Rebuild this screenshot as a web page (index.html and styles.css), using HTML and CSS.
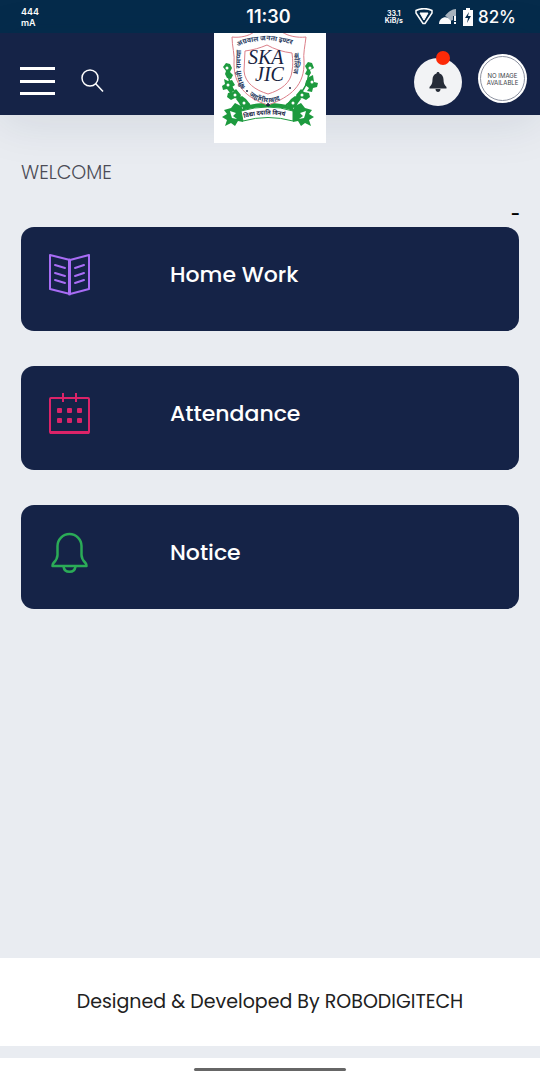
FILE: index.html
```html
<!DOCTYPE html>
<html lang="en">
<head>
    <meta charset="UTF-8">
    <meta name="viewport" content="width=device-width, initial-scale=1.0">
    <title>SKA JIC</title>
    <link rel="stylesheet" href="styles.css">
</head>
<body>
    <div class="status-bar">
        <div class="status-current">444<br>mA</div>
        <div class="status-time">11:30</div>
        <div class="status-right">
            <div class="status-speed">33.1<br>KiB/s</div>
            <svg class="wifi-icon" width="18" height="18" viewBox="0 0 18 18" fill="none" stroke="#fff" stroke-linejoin="round">
                <path d="M1 2.500C5 0 13 0 17 2.500V5L10 15.500H8L1 5z" stroke-width="1.500"/>
                <path d="M5 5h8L9 12z" fill="#fff" stroke-width="1"/>
            </svg>
            <svg class="signal-icon" width="18" height="18" viewBox="0 0 18 18">
                <path d="M6 8C9 4 13 1 17 1v7h-3v4l-3 1-3-4z" fill="#a9b5c0"/>
                <path d="M0 16c0-6 6-8 9-6l3 3v3z" fill="#fff"/>
                <path d="M15 8h2v5h-2zM15 14h2v2h-2z" fill="#fff"/>
            </svg>
            <svg class="battery-icon" width="10" height="18" viewBox="0 0 10 18">
                <path d="M3 0h4v2h3v16H0V2h3z" fill="#fff"/>
                <path d="M6 4 2 10h3l-1 5 4-7H5z" fill="#052b4b"/>
            </svg>
            <span class="status-percent">82%</span>
        </div>
    </div>

    <header class="header">
        <div class="header-left">
            <button class="icon-button" type="button" aria-label="Menu">
                <svg width="36" height="30" viewBox="0 0 36 30" stroke="#fff" stroke-width="3">
                    <path d="M0 2.500h35M0 15.500h35M0 27.500h35"/>
                </svg>
            </button>
            <button class="icon-button" type="button" aria-label="Search">
                <svg width="24" height="24" viewBox="0 0 24 24" fill="none" stroke="#fff" stroke-width="1.500">
                    <circle cx="9" cy="9" r="8"/>
                    <path d="M14.500 14.500L22 22.500"/>
                </svg>
            </button>
        </div>

        <a class="logo" href="#" aria-label="Home">
            <svg width="112" height="110" viewBox="0 0 112 110">
                <defs>
                    <path id="arc-left" d="M32 55C25 42 27 30 27 17"/>
                    <path id="arc-top" d="M24 14C32 8 42 9 52 7C66 8 78 11 92 16"/>
                    <path id="arc-right" d="M80 20C81 30 80 42 75 54"/>
                    <path id="arc-bottom" d="M35 62C46 72 62 72 76 61"/>
                    <path id="arc-ribbon" d="M30 85Q54 78 79 85"/>
                </defs>
                <g fill="#1d9a3e">
                    <path d="M9 34l3-4 4 1 2 4-2 4 3 3-2 4-4-1-2-4 1-3zM10 46l4 2 4-1 3 5-3 2 2 4-4 2-3-4-4 1-1-4 3-2zM14 60l5-1 3-3 5 6-2 5-4-2-4 2-4-3zM22 66l6-3 4 3 4 5-3 5-6-2-2-4z"/>
                    <path d="M98 30l-4-1-3 4 2 4-2 4 4 2 2-3-1-3 4-2zM99 42l-4 2-3 4-1 4 4 3-2 3 5 1 1-4 4-1 1-4-4-1zM95 60l-5-1-3-3-5 6 2 5 4-2 4 2 4-3zM87 66l-6-3-4 3-4 5 3 5 6-2 2-4z"/>
                    <path d="M10 77l7-2 4-5 6 3 3 5-1 11-5-1-3 5-4-3-6 3 2-6-5-3 5-3z"/>
                    <path d="M98 77l-7-2-4-5-6 3-3 5 1 11 5-1 3 5 4-3 6 3-2-6 5-3-5-3z"/>
                    <path d="M29 74c8-3 16-4 25-4s18 1 25 4v4c-8-3-16-4-25-4s-17 1-25 4z"/>
                </g>
                <g fill="none" stroke="#1d9a3e" stroke-width="1.500">
                    <path d="M14 36c0 16 6 26 22 36M95 36c0 16-7 26-23 36"/>
                </g>
                <g fill="#fff">
                    <circle cx="13" cy="35" r="1.500"/><circle cx="14" cy="52" r="1.500"/><circle cx="21" cy="62" r="1.500"/><circle cx="30" cy="70" r="1.500"/>
                    <circle cx="96" cy="35" r="1.500"/><circle cx="98" cy="49" r="1.500"/><circle cx="88" cy="62" r="1.500"/><circle cx="79" cy="70" r="1.500"/>
                    <path d="M16 78l6 2-3 3 4 3-5-1-1-3zM92 78l-6 2 3 3-4 3 5-1 1-3z"/>
                </g>
                <path d="M18 4c8 1 17-1 22-5h28c6 4 15 6 24 5-1 9-3 17-2 24 1 24-13 36-36 44C31 65 20 51 20 31c1-9-2-18-2-27z" fill="#fff" stroke="#dc7f89"/>
                <path d="M31 18c8-1 15-3 22-6 7 4 16 7 25 8 1 8 1 12 0 18-1 12-11 19-24 23C41 57 31 50 30 38c0-7 1-13 1-20z" fill="#fff" stroke="#dc7f89"/>
                <g class="logo-initials">
                    <text x="34" y="31">SKA</text>
                    <text x="41" y="48">JIC</text>
                </g>
                <g class="logo-ring">
                    <text><textPath href="#arc-left">श्रीमती रामप्या</textPath></text>
                    <text><textPath href="#arc-top">अग्रवाल जनता इण्टर</textPath></text>
                    <text><textPath href="#arc-right">कॉलिज</textPath></text>
                    <text><textPath href="#arc-bottom">जहाँगीराबाद</textPath></text>
                </g>
                <circle cx="33" cy="58" r="1" fill="#17233f"/>
                <circle cx="76" cy="55" r="1" fill="#17233f"/>
                <path d="M54 70v5M52 72h4" stroke="#17233f" stroke-width="1.500"/>
                <path d="M27 78Q54 70 79 78L79 88Q54 81 29 88z" fill="#fff" stroke="#1d9a3e"/>
                <text class="logo-motto"><textPath href="#arc-ribbon">विद्या ददाति विनयं</textPath></text>
            </svg>
        </a>

        <div class="header-right">
            <button class="bell-button" type="button" aria-label="Notifications">
                <svg width="18" height="20" viewBox="0 0 18 20" fill="#262c38">
                    <path d="M9 0c1 0 1.500.600 1.500 1.500C13 2.200 14.500 4.500 14.500 7.500c0 4 1 5.500 3 7.500v1.500H.500V15c2-2 3-3.500 3-7.500 0-3 1.500-5.300 4-6C7.500.600 8 0 9 0z"/>
                    <path d="M6.500 17h5c0 4-5 4-5 0z"/>
                </svg>
                <span class="bell-dot"></span>
            </button>
            <a class="avatar" href="#"><span class="avatar-ring">NO IMAGE<br>AVAILABLE</span></a>
        </div>
    </header>

    <main class="content">
        <h1 class="welcome">WELCOME</h1>
        <div class="session">-</div>
        <nav class="card-list">
            <a class="card" href="#">
                <svg class="card-icon" width="42" height="42" viewBox="0 0 42 42" fill="none" stroke="#a86cf5" stroke-width="2" stroke-linejoin="round" stroke-linecap="round">
                    <path d="M1 1l20 5 19-5v34l-19 5-20-5z"/>
                    <path d="M20.500 6v34" stroke-width="3"/>
                    <path d="M6 11l10 3M6 19l10 3M6 26l10 3M35 11l-9 3M35 19l-9 3M35 26l-9 3"/>
                </svg>
                <span class="card-title">Home Work</span>
            </a>
            <a class="card" href="#">
                <svg class="card-icon" width="42" height="42" viewBox="0 0 42 42" fill="none" stroke="#db2368" stroke-width="2">
                    <rect x="1" y="5" width="39" height="35" rx="1"/>
                    <path d="M1 39.500h39" stroke-width="3"/>
                    <path d="M14 0v9M27 0v9"/>
                    <g fill="#db2368" stroke="none">
                        <rect x="8" y="15" width="5" height="5" rx="1"/><rect x="18" y="15" width="5" height="5" rx="1"/><rect x="28" y="15" width="5" height="5" rx="1"/>
                        <rect x="8" y="25" width="5" height="5" rx="1"/><rect x="18" y="25" width="5" height="5" rx="1"/><rect x="28" y="25" width="5" height="5" rx="1"/>
                    </g>
                </svg>
                <span class="card-title">Attendance</span>
            </a>
            <a class="card" href="#">
                <svg class="card-icon" width="42" height="42" viewBox="0 0 42 42" fill="none" stroke="#2bab57" stroke-width="2.500" stroke-linejoin="round">
                    <path d="M8.500 14a12 12 0 0 1 24 0v9c0 4 2 6 4 8 1 1 1 2 1 3h-34c0-1 0-2 1-3 2-2 4-4 4-8z"/>
                    <path d="M14.500 34.500c1 7 11 7 12 0"/>
                </svg>
                <span class="card-title">Notice</span>
            </a>
        </nav>
    </main>

    <footer class="footer">Designed &amp; Developed By ROBODIGITECH</footer>
    <div class="gesture-bar"><span class="gesture-pill"></span></div>
</body>
</html>
```
FILE: styles.css
```css
* {
    box-sizing: border-box;
}
body {
    margin: 0;
    min-height: 100vh;
    display: flex;
    flex-direction: column;
    background-color: #e9ecf1;
    font-family: Poppins, Inter, sans-serif;
}
a {
    color: inherit;
    text-decoration: none;
}
button {
    padding: 0;
    border: none;
    background: none;
    cursor: pointer;
}
svg {
    display: block;
}
.status-bar {
    display: grid;
    grid-template-columns: 1fr auto 1fr;
    align-items: center;
    height: 33px;
    padding: 0 24px 0 21px;
    background-color: #052b4b;
    color: #fff;
    font-family: Inter, sans-serif;
}
.status-current {
    font-size: 9px;
    line-height: 11px;
    font-weight: 600;
}
.status-time {
    font-size: 18px;
    font-weight: 600;
}
.status-right {
    display: flex;
    align-items: center;
    justify-content: flex-end;
}
.status-speed {
    margin-right: 12px;
    font-size: 7px;
    line-height: 7px;
    font-weight: 700;
    text-align: center;
}
.signal-icon {
    margin: 0 6px;
}
.status-percent {
    margin-left: 5px;
    font-size: 17px;
    font-weight: 500;
}
.header {
    display: grid;
    grid-template-columns: 1fr auto 1fr;
    grid-template-rows: 82px;
    align-items: center;
    height: 82px;
    padding: 0 13px;
    background-color: #152347;
    box-shadow: 0 8px 48px rgba(21, 35, 71, 0.1);
}
.header-left {
    display: flex;
    align-items: center;
    gap: 25px;
    padding: 13px 0 0 7px;
}
.logo {
    align-self: start;
    height: 110px;
    background-color: #fff;
    overflow: hidden;
}
.logo-initials {
    font-family: "Liberation Serif", serif;
    font-size: 20px;
    font-style: italic;
    fill: #17233f;
}
.logo-ring {
    font-family: "Noto Sans Devanagari", "Noto Sans", sans-serif;
    font-size: 7px;
    font-weight: 700;
    fill: #2c3e63;
}
.logo-motto {
    font-family: "Noto Sans Devanagari", "Noto Sans", sans-serif;
    font-size: 6px;
    font-weight: 700;
    fill: #17233f;
}
.header-right {
    display: flex;
    align-items: center;
    justify-content: flex-end;
    gap: 16px;
    padding-top: 9px;
}
.bell-button {
    position: relative;
    display: flex;
    align-items: center;
    justify-content: center;
    width: 48px;
    height: 48px;
    margin-top: 7px;
    border-radius: 50%;
    background-color: #f2f3f5;
}
.bell-dot {
    position: absolute;
    top: -7px;
    right: 12px;
    width: 14px;
    height: 14px;
    border-radius: 50%;
    background-color: #fc2a08;
}
.avatar {
    width: 49px;
    height: 49px;
    padding: 2px;
    border-radius: 50%;
    background-color: #fff;
}
.avatar-ring {
    display: flex;
    align-items: center;
    justify-content: center;
    height: 100%;
    border: 1px solid #8d92a0;
    border-radius: 50%;
    color: #3c3f48;
    font-family: Inter, sans-serif;
    font-size: 6px;
    line-height: 7px;
    text-align: center;
}
.content {
    flex: 1;
    padding: 43px 20px 35px 21px;
}
.welcome {
    margin: 0;
    color: #4c4c57;
    font-size: 19px;
    line-height: 30px;
    font-weight: 300;
}
.session {
    margin-top: 15px;
    font-size: 16px;
    line-height: 24px;
    font-weight: 600;
    text-align: right;
}
.card-list {
    display: flex;
    flex-direction: column;
    gap: 35px;
    padding-right: 1px;
}
.card {
    display: flex;
    align-items: flex-start;
    gap: 79px;
    height: 104px;
    padding: 27px 28px;
    border-radius: 13px;
    background-color: #152347;
    color: #fff;
}
.card-title {
    padding-top: 5px;
    font-size: 22px;
    line-height: 32px;
    font-weight: 500;
}
.footer {
    padding: 28px 20px;
    background-color: #fff;
    color: #212121;
    font-size: 19px;
    line-height: 32px;
    text-align: center;
}
.gesture-bar {
    display: flex;
    justify-content: center;
    height: 22px;
    margin-top: 12px;
    padding-top: 10px;
    background-color: #fff;
}
.gesture-pill {
    width: 28%;
    height: 3px;
    border-radius: 2px;
    background-color: #666;
}
```
